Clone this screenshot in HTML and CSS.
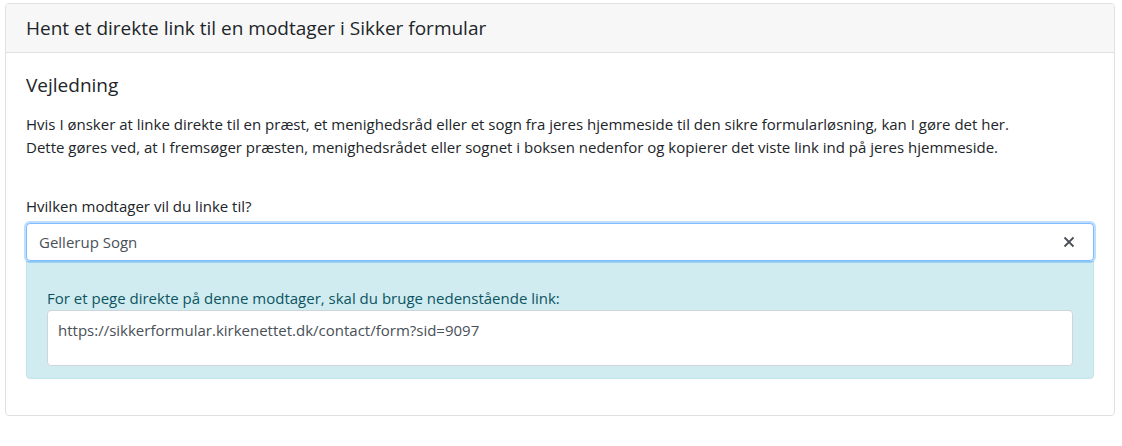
FILE: index.html
```html
<!DOCTYPE html>
<html lang="da">

<head>
    <meta charset="UTF-8">
    <meta name="viewport" content="width=device-width, initial-scale=1.0">
    <link rel="stylesheet" href="styles.css">
    <title>Sikker formular</title>
</head>

<body>
    <div class="card">
        <div class="card-header">
            Hent et direkte link til en modtager i Sikker formular
        </div>
        <div class="card-body">
            <h5 class="card-title">Vejledning</h5>
            <p class="intro">
                Hvis I ønsker at linke direkte til en præst, et menighedsråd eller et sogn fra jeres hjemmeside til den sikre formularløsning, kan I gøre det her.<br>
                Dette gøres ved, at I fremsøger præsten, menighedsrådet eller sognet i boksen nedenfor og kopierer det viste link ind på jeres hjemmeside.
            </p>

            <label class="field-label" for="recipient">Hvilken modtager vil du linke til?</label>
            <div class="search">
                <input type="text" class="search-input" id="recipient" value="Gellerup Sogn">
                <span class="search-clear">
                    <svg width="12" height="12" viewBox="0 0 12 12">
                        <path d="M1.5 1.5 L10.5 10.5 M10.5 1.5 L1.5 10.5" stroke="#495057" stroke-width="1.8" fill="none"/>
                    </svg>
                </span>
            </div>

            <div class="alert">
                <div class="alert-text">For et pege direkte på denne modtager, skal du bruge nedenstående link:</div>
                <div class="link-box">https://sikkerformular.kirkenettet.dk/contact/form?sid=9097</div>
            </div>
        </div>
    </div>
</body>

</html>
```

FILE: styles.css
```css
*,
*::before,
*::after {
    box-sizing: border-box;
}

body {
    margin: 0;
    padding: 3px 7px 0 5px;
    font-family: "Open Sans", "Noto Sans", sans-serif;
    font-size: 15px;
    line-height: 23px;
    color: #212529;
    background: #fff;
}

.card {
    border: 1px solid #e0e0e0;
    border-radius: 4px;
    background: #fff;
}

.card-header {
    height: 49px;
    padding: 0 20px;
    display: flex;
    align-items: center;
    font-size: 19px;
    background: #f7f7f7;
    border-bottom: 1px solid #e0e0e0;
    border-radius: 3px 3px 0 0;
}

.card-body {
    padding: 20px;
}

.card-title {
    margin: 0 0 16px;
    font-size: 19px;
    font-weight: 400;
    line-height: 24px;
}

.intro {
    margin: 0 0 36px;
}

.field-label {
    display: block;
    margin-bottom: 5px;
}

.search {
    position: relative;
}

.search-input {
    display: block;
    width: 100%;
    height: 38px;
    padding: 0 40px 0 12px;
    font: inherit;
    color: #495057;
    border: 1px solid #80bdff;
    border-radius: 4px;
    box-shadow: 0 0 0 2px rgba(0, 123, 255, 0.25);
    outline: none;
}

.search-clear {
    position: absolute;
    right: 19px;
    top: 13px;
    display: flex;
}

.alert {
    margin-bottom: 16px;
    padding: 25px 20px 12px;
    background: #d1ecf1;
    border: 1px solid #bee5eb;
    border-radius: 0 0 4px 4px;
    color: #0c5460;
}

.alert-text {
    line-height: 23px;
}

.link-box {
    height: 56px;
    padding: 8px 10px;
    background: #fff;
    border: 1px solid #ced4da;
    border-radius: 4px;
    color: #495057;
}
```
